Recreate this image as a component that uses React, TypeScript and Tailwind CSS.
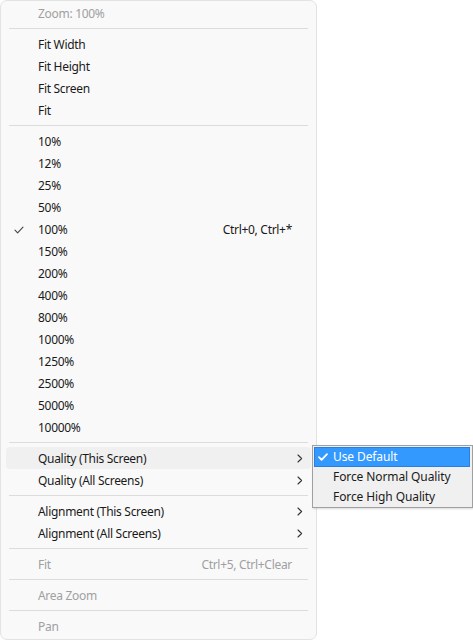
import React from "react";

type Item =
  | { type: "sep" }
  | {
      type: "item";
      label: string;
      disabled?: boolean;
      checked?: boolean;
      shortcut?: string;
      submenu?: boolean;
      hover?: boolean;
    };

const items: Item[] = [
  { type: "item", label: "Zoom: 100%", disabled: true },
  { type: "sep" },
  { type: "item", label: "Fit Width" },
  { type: "item", label: "Fit Height" },
  { type: "item", label: "Fit Screen" },
  { type: "item", label: "Fit" },
  { type: "sep" },
  { type: "item", label: "10%" },
  { type: "item", label: "12%" },
  { type: "item", label: "25%" },
  { type: "item", label: "50%" },
  { type: "item", label: "100%", checked: true, shortcut: "Ctrl+0, Ctrl+*" },
  { type: "item", label: "150%" },
  { type: "item", label: "200%" },
  { type: "item", label: "400%" },
  { type: "item", label: "800%" },
  { type: "item", label: "1000%" },
  { type: "item", label: "1250%" },
  { type: "item", label: "2500%" },
  { type: "item", label: "5000%" },
  { type: "item", label: "10000%" },
  { type: "sep" },
  { type: "item", label: "Quality (This Screen)", submenu: true, hover: true },
  { type: "item", label: "Quality (All Screens)", submenu: true },
  { type: "sep" },
  { type: "item", label: "Alignment (This Screen)", submenu: true },
  { type: "item", label: "Alignment (All Screens)", submenu: true },
  { type: "sep" },
  { type: "item", label: "Fit", disabled: true, shortcut: "Ctrl+5, Ctrl+Clear" },
  { type: "sep" },
  { type: "item", label: "Area Zoom", disabled: true },
  { type: "sep" },
  { type: "item", label: "Pan", disabled: true },
];

function Check({ color, width }: { color: string; width: number }) {
  return (
    <svg width="10" height="8" viewBox="0 0 10 8" fill="none">
      <path d="M1 4.2 L3.6 6.8 L9 1.2" stroke={color} strokeWidth={width} strokeLinecap="round" strokeLinejoin="round" />
    </svg>
  );
}

function Chevron() {
  return (
    <svg width="6" height="9" viewBox="0 0 6 9" fill="none">
      <path d="M1 1 L4.6 4.5 L1 8" stroke="#333" strokeWidth="1.1" strokeLinecap="round" strokeLinejoin="round" />
    </svg>
  );
}

export default function App() {
  return (
    <div className="relative w-[473px] h-[641px] bg-white font-['Noto_Sans',sans-serif] text-[12px] leading-none">
      <div className="w-[317px] h-[640px] border border-[#e3e3e3] rounded-[7px] bg-[#f9f9f9] pt-[1px] pb-[2px] flex flex-col tracking-[-0.3px]">
        {items.map((it, i) =>
          it.type === "sep" ? (
            <div key={i} className="h-[9px] flex items-center mx-[8px]">
              <div className="h-px w-full bg-[#dcdcdc]" />
            </div>
          ) : (
            <div
              key={i}
              className={`relative mx-[5px] h-[22px] flex items-center rounded-[4px] ${
                it.hover ? "bg-[#f0f0f0]" : ""
              } ${it.disabled ? "text-[#a0a0a0]" : "text-[#1a1a1a]"}`}
            >
              {it.checked && (
                <div className="absolute left-[8px] top-[8px]">
                  <Check color="#444" width={1.1} />
                </div>
              )}
              <span className="flex-1 pl-[32px] pt-[2px]">{it.label}</span>
              {it.shortcut && <span className="pt-[2px]">{it.shortcut}</span>}
              <div className="w-[19px] h-full flex items-center pl-[5px]">
                {it.submenu && <Chevron />}
              </div>
            </div>
          )
        )}
      </div>

      <div className="absolute left-[312px] top-[445px] w-[161px] border border-[#a0a0a0] bg-[#f0f0f0] pt-[1px] pb-[1px] pl-[1px] pr-[2px] shadow-[1px_1px_2px_rgba(0,0,0,0.15)] tracking-[-0.1px]">
        <div className="relative h-[20px] flex items-center bg-[#3399ff] border border-[#2a80e0] text-white">
          <div className="absolute left-[3px] top-[5px]">
            <Check color="#ffffff" width={1.8} />
          </div>
          <span className="pl-[18px]">Use Default</span>
        </div>
        <div className="h-[20px] flex items-center text-[#1a1a1a]">
          <span className="pl-[19px]">Force Normal Quality</span>
        </div>
        <div className="h-[19px] flex items-center text-[#1a1a1a]">
          <span className="pl-[19px]">Force High Quality</span>
        </div>
      </div>
    </div>
  );
}
